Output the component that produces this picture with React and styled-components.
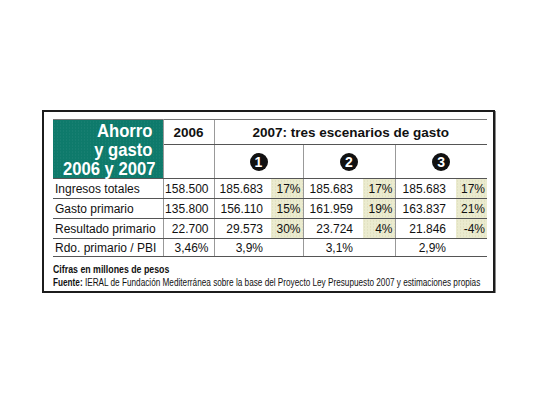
import styled, { createGlobalStyle } from "styled-components";

const GlobalStyle = createGlobalStyle`
  html, body {
    margin: 0;
    padding: 0;
    background: #ffffff;
  }
`;

const ROWS = [
  { label: "Ingresos totales", base: "158.500", s: [["185.683", "17%"], ["185.683", "17%"], ["185.683", "17%"]] },
  { label: "Gasto primario", base: "135.800", s: [["156.110", "15%"], ["161.959", "19%"], ["163.837", "21%"]] },
  { label: "Resultado primario", base: "22.700", s: [["29.573", "30%"], ["23.724", "4%"], ["21.846", "-4%"]] },
  { label: "Rdo. primario / PBI", base: "3,46%", s: [["3,9%", null], ["3,1%", null], ["2,9%", null]] },
];

const Page = styled.div`
  padding: 110px 0 0 42px;
`;

const Frame = styled.div`
  box-sizing: border-box;
  width: 453px;
  height: 183px;
  border: 2px solid #1c1c1c;
  box-shadow: 1px 1px 0 #8a8a8a;
  padding: 7px 6px 0 9px;
  font-family: "Liberation Sans", Arial, sans-serif;
  color: #111;
`;

const Table = styled.table`
  border-collapse: collapse;
  table-layout: fixed;
  width: 434px;
`;

const Col = styled.col`
  width: ${(p) => p.w}px;
`;

const HeadRow = styled.tr`
  height: ${(p) => p.h}px;
`;

const TitleCell = styled.th`
  background-color: #0e7a6b;
  background-image: radial-gradient(rgba(255, 255, 255, 0.08) 0.6px, transparent 0.8px);
  background-size: 3px 3px;
  color: #ffffff;
  font-weight: bold;
  font-size: 18.5px;
  line-height: 19px;
  text-align: right;
  padding: 0 10px 0 0;
  border-top: 1px solid #777;
  border-bottom: 1px solid #555;
  border-right: 1px solid #999;
  vertical-align: middle;
  white-space: nowrap;
`;

const TitleLine = styled.span`
  display: block;
  transform: scaleX(0.9);
  transform-origin: right center;
`;

const HeadCell = styled.th`
  font-size: 13.5px;
  font-weight: bold;
  text-align: center;
  padding: 0;
  border-top: 1px solid #777;
  border-bottom: 1px solid #555;
  border-left: 1px solid #999;
  vertical-align: middle;
  white-space: nowrap;
`;

const Circle = styled.span`
  display: inline-flex;
  align-items: center;
  justify-content: center;
  width: 18px;
  height: 18px;
  border-radius: 50%;
  background: #111;
  color: #fff;
  font-size: 14px;
  font-weight: bold;
  line-height: 1;
  margin-top: 1px;
`;

const BodyRow = styled.tr`
  height: ${(p) => p.h}px;
`;

const Label = styled.td`
  font-size: 12px;
  padding: 0 0 0 2px;
  border-bottom: 1px solid #555;
  border-right: 1px solid #999;
  white-space: nowrap;
`;

const Num = styled.td`
  font-size: 12px;
  text-align: right;
  padding: 0 ${(p) => p.pad}px 0 0;
  border-bottom: 1px solid #555;
  border-left: ${(p) => (p.edge ? "1px solid #999" : "none")};
  white-space: nowrap;
`;

const Pct = styled.td`
  font-size: 12px;
  text-align: right;
  padding: 0 2px 0 0;
  border-bottom: 1px solid #555;
  background-color: ${(p) => (p.empty ? "transparent" : "#ebebcf")};
  background-image: ${(p) =>
    p.empty ? "none" : "radial-gradient(rgba(160, 160, 110, 0.25) 0.6px, transparent 0.8px)"};
  background-size: 3px 3px;
  white-space: nowrap;
`;

const Notes = styled.div`
  margin-top: 5px;
  color: #111;
  white-space: nowrap;
`;

const Units = styled.div`
  font-size: 11px;
  font-weight: bold;
  line-height: 14px;
  transform: scaleX(0.8);
  transform-origin: left center;
`;

const Source = styled.div`
  font-size: 10px;
  line-height: 13px;
  transform: scaleX(0.82);
  transform-origin: left center;

  b {
    font-weight: bold;
  }
`;

export default function App() {
  return (
    <Page>
      <GlobalStyle />
      <Frame>
        <Table>
          <colgroup>
            <Col w={110} />
            <Col w={51} />
            <Col w={57} />
            <Col w={32} />
            <Col w={60} />
            <Col w={32} />
            <Col w={61} />
            <Col w={31} />
          </colgroup>
          <thead>
            <HeadRow h={25}>
              <TitleCell rowSpan={2}>
                <TitleLine>Ahorro</TitleLine>
                <TitleLine>y gasto</TitleLine>
                <TitleLine>2006 y 2007</TitleLine>
              </TitleCell>
              <HeadCell>2006</HeadCell>
              <HeadCell colSpan={6}>2007: tres escenarios de gasto</HeadCell>
            </HeadRow>
            <HeadRow h={34}>
              <HeadCell />
              {[1, 2, 3].map((n) => (
                <HeadCell key={n} colSpan={2}>
                  <Circle>{n}</Circle>
                </HeadCell>
              ))}
            </HeadRow>
          </thead>
          <tbody>
            {ROWS.map((row, i) => (
              <BodyRow key={row.label} h={i === 3 ? 18 : 20}>
                <Label>{row.label}</Label>
                <Num pad={5}>{row.base}</Num>
                {row.s.map(([num, pct], j) => (
                  <>
                    <Num key={`n${j}`} edge pad={j === 0 ? 8 : 10}>
                      {num}
                    </Num>
                    <Pct key={`p${j}`} empty={!pct}>
                      {pct}
                    </Pct>
                  </>
                ))}
              </BodyRow>
            ))}
          </tbody>
        </Table>
        <Notes>
          <Units>Cifras en millones de pesos</Units>
          <Source>
            <b>Fuente:</b> IERAL de Fundación Mediterránea sobre la base del Proyecto Ley Presupuesto 2007 y estimaciones propias
          </Source>
        </Notes>
      </Frame>
    </Page>
  );
}
